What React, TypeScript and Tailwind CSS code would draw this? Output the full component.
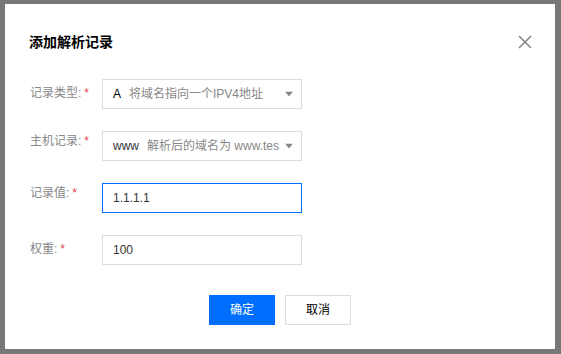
import { X } from "lucide-react";

const font = { fontFamily: '"Liberation Sans", "Noto Sans CJK SC", sans-serif' };

function Label({ text, high }: { text: string; high?: boolean }) {
  return (
    <div className={`w-[72px] shrink-0 text-[12px] leading-[18px] text-[#888] ${high ? "pt-[1px]" : "pt-[5px]"}`}>
      {text}
      <span className="ml-[3px] text-[#e54545]">*</span>
    </div>
  );
}

function Caret() {
  return (
    <svg width="8" height="5" viewBox="0 0 8 5" className="absolute right-[8px] top-1/2 -translate-y-1/2">
      <path d="M0 0 L8 0 L4 5 Z" fill="#888" />
    </svg>
  );
}

export default function App() {
  return (
    <div className="h-[354px] w-[561px] bg-[#777] pt-[4px] pl-[5px]" style={font}>
      <div className="flex h-[345px] w-[550px] flex-col bg-white px-[24px] pt-[28px]">
        <div className="flex h-[20px] items-center justify-between">
          <span className="text-[14px] font-bold leading-[20px] text-[#000]">添加解析记录</span>
          <X size={22} strokeWidth={1.8} className="mr-[-5px] text-[#888]" />
        </div>

        <div className="mt-[27px] flex flex-col gap-[22px] pl-[1px]">
          <div className="flex">
            <Label text="记录类型:" />
            <div className="relative flex h-[30px] w-[200px] items-center border border-[#ddd] pl-[10px] text-[12px]">
              <span className="text-[#000]">A</span>
              <span className="ml-[8px] text-[#888]">将域名指向一个IPV4地址</span>
              <Caret />
            </div>
          </div>

          <div className="flex">
            <Label text="主机记录:" high />
            <div className="relative flex h-[30px] w-[200px] items-center overflow-hidden border border-[#ddd] pl-[10px] text-[12px]">
              <span className="text-[#333]">www</span>
              <span className="ml-[8px] whitespace-nowrap text-[#888]">解析后的域名为 www.tes</span>
              <div className="absolute right-0 top-0 flex h-full w-[20px] bg-white" />
              <Caret />
            </div>
          </div>

          <div className="flex">
            <Label text="记录值:" high />
            <div className="flex h-[30px] w-[200px] items-center border border-[#006eff] pl-[10px] text-[12px] text-[#333]">
              1.1.1.1
            </div>
          </div>

          <div className="flex">
            <Label text="权重:" />
            <div className="flex h-[30px] w-[200px] items-center border border-[#ddd] pl-[10px] text-[12px] text-[#333]">
              100
            </div>
          </div>
        </div>

        <div className="mt-[30px] flex justify-center gap-[10px]">
          <button className="h-[30px] w-[66px] bg-[#006eff] text-[12px] text-white">确定</button>
          <button className="h-[30px] w-[66px] border border-[#ddd] bg-white text-[12px] text-[#000]">取消</button>
        </div>
      </div>
    </div>
  );
}
